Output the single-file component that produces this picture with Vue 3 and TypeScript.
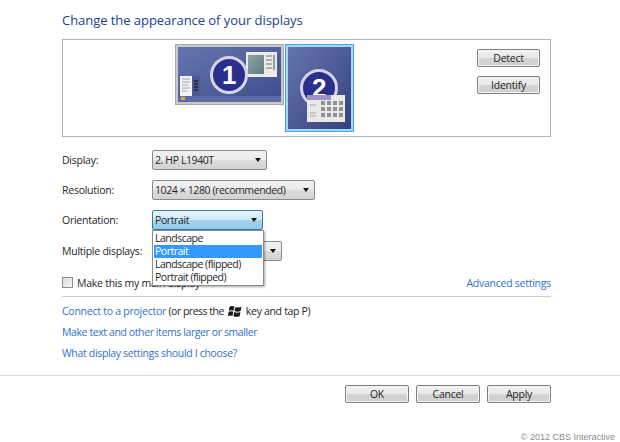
<script setup lang="ts">
const orientations = ['Landscape', 'Portrait', 'Landscape (flipped)', 'Portrait (flipped)']
const selected = 'Portrait'
</script>

<template>
  <div class="page">
    <h1 class="title">Change the appearance of your displays</h1>

    <div class="preview">
      <div class="monitors">
        <svg class="mon-one" width="109" height="61" viewBox="0 0 109 61">
          <defs>
            <linearGradient id="deskA" x1="0" y1="0" x2="1" y2="1">
              <stop offset="0" stop-color="#6674ae" />
              <stop offset="1" stop-color="#3f4c8c" />
            </linearGradient>
            <linearGradient id="winA" x1="0" y1="0" x2="1" y2="1">
              <stop offset="0" stop-color="#8fa5a5" />
              <stop offset="1" stop-color="#5f7a85" />
            </linearGradient>
          </defs>
          <rect x="0.5" y="0.5" width="108" height="60" fill="#c9c9c9" stroke="#a8a8a8" />
          <rect x="3" y="3" width="103" height="55" fill="url(#deskA)" />
          <rect x="3" y="52" width="103" height="6" fill="#5c6aa6" />
          <rect x="6" y="53" width="4" height="3" fill="#c7b24a" />
          <rect x="71" y="8" width="31" height="25" fill="#eceae4" />
          <rect x="73" y="11" width="16" height="19" fill="url(#winA)" />
          <path d="M91 12h6M91 16h6M91 20h6M91 24h6" stroke="#9a9a9a" stroke-width="1.5" />
          <rect x="98" y="11" width="2" height="15" fill="#8fa0b5" />
          <rect x="5" y="32" width="12" height="20" fill="#f1f1f1" />
          <path d="M7 35h8M7 38h8M7 41h6M7 44h8M7 47h5" stroke="#a5a5a5" />
          <rect x="17" y="32" width="8" height="20" fill="#4d5a90" />
          <path d="M19 37h4M19 40h4M19 43h4M19 46h4" stroke="#23252f" stroke-width="1.5" />
          <circle cx="54" cy="31" r="17.5" fill="#2a2f8c" stroke="#d3d5e6" stroke-width="3" />
          <text x="54" y="40" class="digit">1</text>
        </svg>
        <svg class="mon-two" width="69" height="88" viewBox="0 0 69 88">
          <defs>
            <linearGradient id="deskB" x1="0" y1="0" x2="1" y2="1">
              <stop offset="0" stop-color="#6674ae" />
              <stop offset="1" stop-color="#35417f" />
            </linearGradient>
          </defs>
          <rect x="0.5" y="0.5" width="68" height="87" fill="#a5d8f3" stroke="#4aa3dc" />
          <rect x="3" y="3" width="63" height="82" fill="url(#deskB)" />
          <circle cx="34" cy="44" r="17.5" fill="#2a2f8c" stroke="#d3d5e6" stroke-width="3" />
          <text x="34" y="53" class="digit">2</text>
          <rect x="22" y="51" width="38" height="27" fill="#e9e8e4" />
          <rect x="22" y="51" width="24" height="5" fill="#9d92c3" />
          <g fill="#8d9298">
            <rect x="36" y="57" width="4" height="4" /><rect x="42" y="57" width="4" height="4" /><rect x="48" y="57" width="4" height="4" /><rect x="54" y="57" width="4" height="4" />
            <rect x="36" y="63" width="4" height="4" /><rect x="42" y="63" width="4" height="4" /><rect x="48" y="63" width="4" height="4" /><rect x="54" y="63" width="4" height="4" />
            <rect x="36" y="69" width="4" height="4" /><rect x="42" y="69" width="4" height="4" /><rect x="48" y="69" width="4" height="4" /><rect x="54" y="69" width="4" height="4" />
          </g>
          <path d="M25 61h6M25 69h6M25 72h6" stroke="#a0a0a0" />
        </svg>
      </div>
      <div class="preview-btns">
        <button class="btn small">Detect</button>
        <button class="btn small">Identify</button>
      </div>
    </div>

    <div class="form">
      <div class="row">
        <label>Display:</label>
        <div class="select w-display"><span>2. HP L1940T</span><i class="caret"></i></div>
      </div>
      <div class="row">
        <label>Resolution:</label>
        <div class="select w-res"><span>1024 × 1280 (recommended)</span><i class="caret"></i></div>
      </div>
      <div class="row orient-row">
        <label>Orientation:</label>
        <div class="select w-orient focused">
          <span>Portrait</span><i class="caret"></i>
          <ul class="menu">
            <li v-for="o in orientations" :key="o" :class="{ active: o === selected }">{{ o }}</li>
          </ul>
        </div>
      </div>
      <div class="row">
        <label>Multiple displays:</label>
        <div class="select w-multi"><span></span><i class="caret"></i></div>
      </div>
    </div>

    <div class="check-row">
      <label class="check"><i class="box"></i><span>Make this my main display</span></label>
      <a class="link">Advanced settings</a>
    </div>

    <div class="links">
      <p><a class="link">Connect to a projector</a> <span class="rest-a">(or press the</span><svg class="winkey" width="14" height="13" viewBox="0 0 14 13">
          <path d="M1.6 1.6C3.4.8 4.8.9 6.4 1.6L5.5 5.8C3.9 5 2.4 5 .8 5.8Z" fill="#1b1b1b" />
          <path d="M7.3 2C9.2 2.8 11 2.8 13.4 1.8L12.6 6C10.6 6.9 8.6 6.9 6.5 6.1Z" fill="#1b1b1b" />
          <path d="M.7 6.8C2.4 6 3.8 6 5.3 6.8L4.4 11C2.9 10.2 1.5 10.2-.2 11Z" fill="#1b1b1b" />
          <path d="M6.3 7.1C8.4 7.9 10.4 7.9 12.4 7L11.6 11.2C9.6 12 7.5 12 5.4 11.2Z" fill="#1b1b1b" />
        </svg><span class="rest">key and tap P)</span></p>
      <p class="tight-b"><a class="link">Make text and other items larger or smaller</a></p>
      <p class="tight-c"><a class="link">What display settings should I choose?</a></p>
    </div>

    <div class="footer">
      <button class="btn">OK</button>
      <button class="btn">Cancel</button>
      <button class="btn">Apply</button>
    </div>

    <div class="credit">© 2012 CBS Interactive</div>
  </div>
</template>

<style>
html, body {
  margin: 0;
  background: #fff;
}
</style>

<style scoped>
.page {
  width: 620px;
  height: 442px;
  overflow: hidden;
  font-family: "Open Sans", "Noto Sans", sans-serif;
  font-size: 10.5px;
  letter-spacing: -0.25px;
  color: #262626;
  box-sizing: border-box;
  padding-top: 11px;
}
.title {
  margin: 0 0 0 62px;
  font-size: 13px;
  line-height: 18px;
  font-weight: 400;
  letter-spacing: -0.05px;
  color: #1a3f94;
}
.preview {
  margin: 10px 69px 0 62px;
  height: 98px;
  box-sizing: border-box;
  border: 1px solid #b5b5b5;
  position: relative;
}
.monitors {
  position: absolute;
  left: 112px;
  top: 4px;
  display: flex;
  align-items: flex-start;
  gap: 1px;
}
.digit {
  font-family: "Liberation Sans", sans-serif;
  font-size: 26px;
  font-weight: 700;
  fill: #fff;
  text-anchor: middle;
}
.preview-btns {
  position: absolute;
  right: 10px;
  top: 9px;
  display: flex;
  flex-direction: column;
  gap: 9px;
}
.btn {
  width: 64px;
  height: 18px;
  padding: 0;
  border: 1px solid #7e7e7e;
  border-radius: 2px;
  background: linear-gradient(#f2f2f2 0, #e8e8e8 48%, #d4d4d4 52%, #cfcfcf 100%);
  box-shadow: inset 0 0 0 1px #f5f5f5;
  font: inherit;
  letter-spacing: inherit;
  color: #262626;
  line-height: 15px;
}
.btn.small {
  width: 63px;
}
.form {
  margin: 13px 0 0 62px;
}
.row {
  display: flex;
  align-items: center;
  height: 20px;
  margin-bottom: 10px;
}
.orient-row {
  margin-bottom: 11px;
}
.row label {
  width: 90px;
  flex: none;
}
.select {
  position: relative;
  box-sizing: border-box;
  height: 20px;
  display: flex;
  align-items: center;
  justify-content: space-between;
  padding: 0 5px 0 2px;
  border: 1px solid #8a8a8a;
  border-radius: 2px;
  letter-spacing: -0.4px;
  background: linear-gradient(#f2f2f2 0, #ebebeb 48%, #dcdcdc 52%, #d2d2d2 100%);
}
.w-display { width: 115px; }
.w-res { width: 163px; }
.w-orient {
  width: 111px;
  border-color: #3d7a9e;
  background: linear-gradient(#e6f4fb 0, #cfe9f7 48%, #a6d5ef 52%, #8fc9ea 100%);
}
.w-multi { width: 130px; }
.caret {
  width: 0;
  height: 0;
  border-left: 3.5px solid transparent;
  border-right: 3.5px solid transparent;
  border-top: 4px solid #111;
}
.menu {
  position: absolute;
  left: -1px;
  top: 19px;
  z-index: 2;
  width: 112px;
  margin: 0;
  padding: 1px;
  box-sizing: border-box;
  list-style: none;
  background: #fff;
  border: 1px solid #8d8d8d;
  box-shadow: 1px 1px 2px rgba(0, 0, 0, 0.35);
  letter-spacing: -0.5px;
}
.menu li {
  height: 13px;
  line-height: 13px;
  padding-left: 1px;
  white-space: nowrap;
}
.menu li.active {
  background: #3399ff;
  color: #fff;
}
.check-row {
  margin: 13px 69px 0 62px;
  display: flex;
  align-items: center;
  justify-content: space-between;
  height: 17px;
  padding-bottom: 5px;
  border-bottom: 1px solid #cfcfcf;
}
.check {
  display: flex;
  align-items: center;
  gap: 4px;
}
.box {
  width: 9px;
  height: 9px;
  border: 1px solid #8e8e8e;
  background: linear-gradient(135deg, #dcdcdc, #f6f6f6);
}
.link {
  color: #2f72cc;
}
.links {
  margin: 4px 0 0 62px;
}
.links p {
  margin: 0;
  height: 21px;
  line-height: 21px;
  white-space: nowrap;
}
.rest {
  letter-spacing: -0.32px;
}
.rest-a {
  letter-spacing: -0.5px;
}
.tight-b {
  letter-spacing: -0.4px;
}
.tight-c {
  letter-spacing: -0.33px;
}
.winkey {
  vertical-align: -3px;
  margin: 0 4px;
}
.footer {
  margin-top: 11px;
  height: 28px;
  padding: 9px 69px 0 0;
  box-sizing: border-box;
  border-top: 1px solid #dcdcdc;
  display: flex;
  justify-content: flex-end;
  gap: 7px;
}
.credit {
  margin-top: 29px;
  padding-right: 5px;
  text-align: right;
  font-family: "Liberation Sans", sans-serif;
  font-size: 9px;
  letter-spacing: 0;
  color: #8c8c8c;
  line-height: 11px;
}
</style>
